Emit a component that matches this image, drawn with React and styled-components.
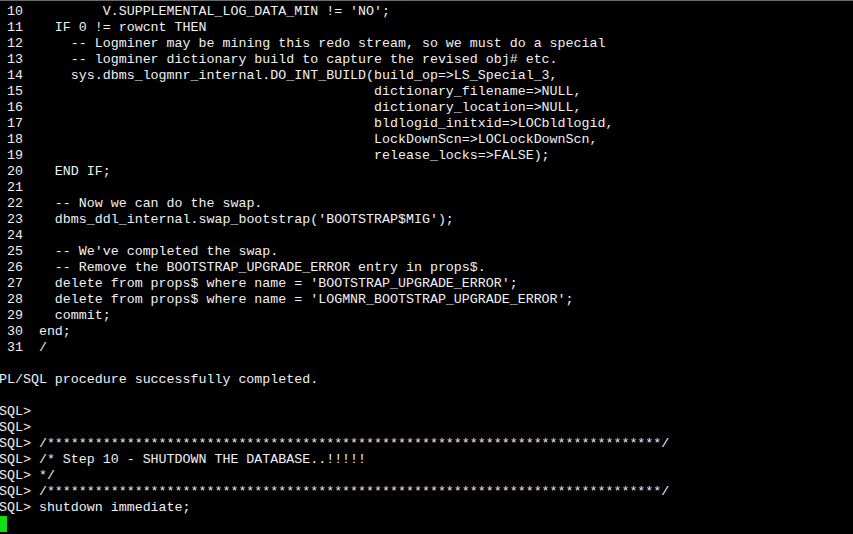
import React from "react";
import styled, { createGlobalStyle } from "styled-components";

const GlobalStyle = createGlobalStyle`
  html, body {
    margin: 0;
    padding: 0;
    background: #000;
  }
`;

const codeLines = [
  [10, "        V.SUPPLEMENTAL_LOG_DATA_MIN != 'NO';"],
  [11, "  IF 0 != rowcnt THEN"],
  [12, "    -- Logminer may be mining this redo stream, so we must do a special"],
  [13, "    -- logminer dictionary build to capture the revised obj# etc."],
  [14, "    sys.dbms_logmnr_internal.DO_INT_BUILD(build_op=>LS_Special_3,"],
  [15, "                                          dictionary_filename=>NULL,"],
  [16, "                                          dictionary_location=>NULL,"],
  [17, "                                          bldlogid_initxid=>LOCbldlogid,"],
  [18, "                                          LockDownScn=>LOCLockDownScn,"],
  [19, "                                          release_locks=>FALSE);"],
  [20, "  END IF;"],
  [21, ""],
  [22, "  -- Now we can do the swap."],
  [23, "  dbms_ddl_internal.swap_bootstrap('BOOTSTRAP$MIG');"],
  [24, ""],
  [25, "  -- We've completed the swap."],
  [26, "  -- Remove the BOOTSTRAP_UPGRADE_ERROR entry in props$."],
  [27, "  delete from props$ where name = 'BOOTSTRAP_UPGRADE_ERROR';"],
  [28, "  delete from props$ where name = 'LOGMNR_BOOTSTRAP_UPGRADE_ERROR';"],
  [29, "  commit;"],
  [30, "end;"],
  [31, "/"],
];

const stars = "/" + "*".repeat(77) + "/";

const prompts = [
  "",
  "",
  stars,
  "/* Step 10 - SHUTDOWN THE DATABASE..!!!!!",
  "*/",
  stars,
  "shutdown immediate;",
];

const App = () => {
  return (
    <>
      <GlobalStyle />
      <Terminal>
        {codeLines.map(([n, text]) => (
          <Line key={n}>
            {String(n).padStart(3, " ")}
            {"  " + text}
          </Line>
        ))}
        <Line />
        <Line>PL/SQL procedure successfully completed.</Line>
        <Line />
        {prompts.map((text, i) => (
          <Line key={"p" + i}>
            {"SQL> "}
            {text}
          </Line>
        ))}
        <Line>
          <Cursor />
        </Line>
      </Terminal>
    </>
  );
};

const Terminal = styled.div`
  width: 853px;
  height: 534px;
  box-sizing: border-box;
  overflow: hidden;
  background-color: #000;
  border-top: 1px solid #6b6b6b;
  padding-top: 3px;
  font-family: "Liberation Mono", "Courier New", monospace;
  font-size: 13.3px;
  color: #f0f0f0;
`;

const Line = styled.div`
  height: 16px;
  line-height: 16px;
  white-space: pre;
  margin-left: -1px;
`;

const Cursor = styled.span`
  display: inline-block;
  width: 8px;
  height: 16px;
  vertical-align: top;
  background-color: #12e012;
`;

export default App;
